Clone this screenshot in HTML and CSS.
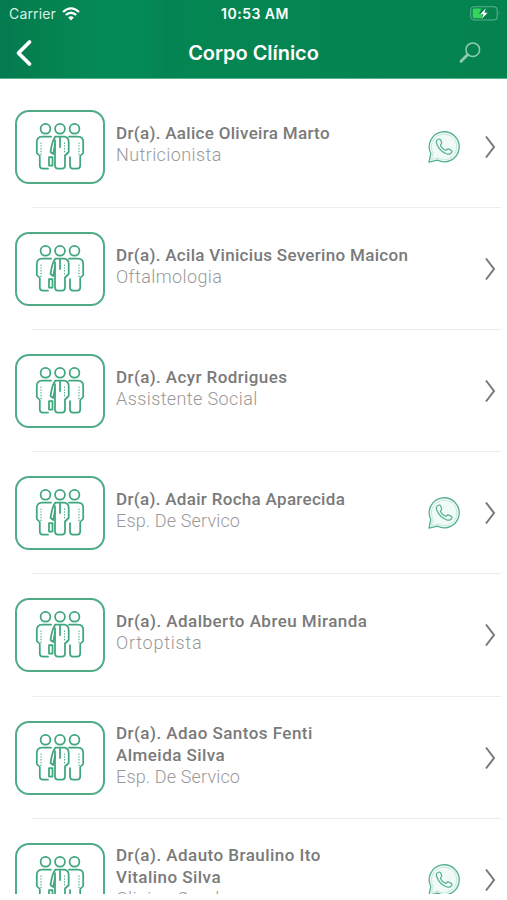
FILE: index.html
```
<!DOCTYPE html>
<html lang="pt-BR">
<head>
<meta charset="utf-8">
<title>Corpo Clínico</title>
<link rel="stylesheet" href="styles.css">
</head>
<body>
<svg width="0" height="0" class="defs">
  <symbol id="people" viewBox="0 0 50 50">
    <g fill="none" stroke="#3fa67d" stroke-width="1.75" stroke-linecap="round" stroke-linejoin="round">
      <circle cx="10.5" cy="6.8" r="4.9"/><circle cx="25" cy="6.8" r="4.9"/><circle cx="39.5" cy="6.8" r="4.9"/>
      <path d="M16 14.7H7C3.5 14.7 1.8 16.5 1.8 20V31L4.8 34V43.5Q4.8 46.7 8 46.7H13"/>
      <path d="M34 14.7H43C46.5 14.7 48.2 16.5 48.2 20V31L45.2 34V43.5Q45.2 46.7 42 46.7H38Q35 46.7 35 43.5V35"/>
      <path d="M20.5 14.7H29.5Q33.7 15.5 33.7 20V30L30 33.5V43.5Q30 46.7 27 46.7H23Q20 46.7 20 43.5V18"/>
      <path d="M20.5 14.7Q17.5 17 15.5 30L18.2 32L20 23M25 15.5V25"/>
      <path d="M14 35H17.5V43.5H14Z"/>
      <path d="M6 21V34M29.5 21V30M44 21V34" stroke-width="1.2" stroke-dasharray=".3 2.5"/>
    </g>
  </symbol>
  <symbol id="chat" viewBox="0 0 34 34">
    <g fill="none" stroke="#55b18d" stroke-linejoin="round">
      <path d="M2 32.2L3.8 23.5A15 15 0 1 1 10.5 30.2Z" stroke-width="1.3" fill="#f0faf6"/>
      <path d="M4.5 29.5L6 23A12.7 12.7 0 1 1 11 28Z" stroke="#b9dfd0" stroke-width=".7"/>
      <path d="M11.3 9.3C9.6 10 9 12 9.8 14C11.8 19.3 15 22.2 20 24C22.5 24.8 25 23.2 25 21.3C25 20.5 22 18.7 20.8 18.8C20 19 19.5 20.5 18.5 20.3C16.5 19.6 14.3 17.5 13.5 15.5C13.4 14.7 14.8 14 14.7 13C14.5 12 13.4 9 12.3 9Q11.8 9 11.3 9.3Z" stroke-width="1.2"/>
    </g>
  </symbol>
  <symbol id="next" viewBox="0 0 12 26">
    <path d="M2 2.5L10 13L2 23.5" fill="none" stroke="#777" stroke-width="2"/>
  </symbol>
</svg>
<div class="screen">
  <header class="header">
    <div class="status">
      <div class="carrier"><span>Carrier</span>
        <svg width="18" height="14" viewBox="0 0 18 14" fill="none" stroke="#fff" stroke-width="2.3"><path d="M1 5Q9-2.2 17 5M3.8 8Q9 3.4 14.2 8"/><path d="M9 13.5L6.2 10.5Q9 8 11.8 10.5Z" fill="#fff" stroke="none"/></svg>
      </div>
      <div class="time">10:53 AM</div>
      <svg class="battery" width="31" height="15" viewBox="0 0 31 15"><rect x=".7" y=".7" width="26.5" height="13.3" rx="3.5" fill="none" stroke="#5cad8b" stroke-width="1.1"/><path d="M4 2.6H11.5L9 8H12V12.2H4Q2.7 12.2 2.7 10.7V4Q2.7 2.6 4 2.6Z" fill="#37d45c"/><path d="M15.8 2.2L10.3 8.2H13.4L11.9 12.8L17.6 6.7H14.4Z" fill="#fff"/><path d="M28.8 5V9.8Q30.5 7.4 28.8 5Z" fill="#5cad8b"/></svg>
    </div>
    <div class="nav">
      <svg width="18" height="28" viewBox="0 0 18 28"><path d="M14.5 3L3.5 14L14.5 25" fill="none" stroke="#fff" stroke-width="3.8" stroke-linecap="round" stroke-linejoin="round"/></svg>
      <h1>Corpo Clínico</h1>
      <svg width="24" height="24" viewBox="0 0 24 24" fill="none" stroke="#8ecbb0"><circle cx="14.8" cy="8.7" r="6.8" stroke-width="1.5"/><path d="M9.6 13.7L3 20.3" stroke-width="3" stroke-linecap="round"/></svg>
    </div>
  </header>
  <main class="list">
    <article class="row"><div class="avatar"><svg><use href="#people"/></svg></div><div class="info"><h2 class="snug">Dr(a). Aalice Oliveira Marto</h2><p>Nutricionista</p></div><svg class="chat"><use href="#chat"/></svg><svg class="next"><use href="#next"/></svg></article>
    <article class="row"><div class="avatar"><svg><use href="#people"/></svg></div><div class="info"><h2 class="snug">Dr(a). Acila Vinicius Severino Maicon</h2><p>Oftalmologia</p></div><svg class="next"><use href="#next"/></svg></article>
    <article class="row"><div class="avatar"><svg><use href="#people"/></svg></div><div class="info"><h2>Dr(a). Acyr Rodrigues</h2><p>Assistente Social</p></div><svg class="next"><use href="#next"/></svg></article>
    <article class="row"><div class="avatar"><svg><use href="#people"/></svg></div><div class="info"><h2 class="snug">Dr(a). Adair Rocha Aparecida</h2><p class="snug">Esp. De Servico</p></div><svg class="chat"><use href="#chat"/></svg><svg class="next"><use href="#next"/></svg></article>
    <article class="row"><div class="avatar"><svg><use href="#people"/></svg></div><div class="info"><h2 class="loose">Dr(a). Adalberto Abreu Miranda</h2><p class="loose">Ortoptista</p></div><svg class="next"><use href="#next"/></svg></article>
    <article class="row"><div class="avatar"><svg><use href="#people"/></svg></div><div class="info"><h2 class="loose">Dr(a). Adao Santos Fenti<br>Almeida Silva</h2><p class="snug">Esp. De Servico</p></div><svg class="next"><use href="#next"/></svg></article>
    <article class="row"><div class="avatar"><svg><use href="#people"/></svg></div><div class="info"><h2 class="loose">Dr(a). Adauto Braulino Ito<br>Vitalino Silva</h2><p>Clinico Geral</p></div><svg class="chat"><use href="#chat"/></svg><svg class="next"><use href="#next"/></svg></article>
  </main>
</div>
</body>
</html>
```
FILE: styles.css
```
* { box-sizing: border-box; }
html, body { margin: 0; height: 900px; overflow: hidden; background: #fff; }
h1, h2, p { margin: 0; }
.defs { position: absolute; }
.screen { height: 894px; overflow: hidden; font-family: Roboto, sans-serif; }
.header {
  height: 79px;
  border-bottom: 1px solid #55b18c;
  background: linear-gradient(90deg, #047a4f 0, #04814f 40px, #048a56 100px, #048a56 145px, #048352 165px, #048653 190px, #04834f 507px);
  color: #fff;
  font-family: Inter, sans-serif;
}
.status { height: 27px; padding: 0 6px 0 9px; display: grid; grid-template-columns: 1fr auto 1fr; align-items: center; }
.carrier { display: flex; align-items: center; gap: 6px; font-size: 14px; letter-spacing: .15px; color: #d9efe5; }
.time { font-size: 14px; font-weight: 600; letter-spacing: .5px; }
.battery { justify-self: end; }
.nav { height: 51px; padding: 0 25px 0 15px; display: grid; grid-template-columns: 1fr auto 1fr; align-items: center; }
.nav svg:last-child { justify-self: end; }
.nav h1 { font-size: 20px; line-height: 26px; font-weight: 600; letter-spacing: -.05px; transform: translateX(5px); }
.list { padding-top: 6.6px; }
.row { position: relative; height: 122.2px; padding: 0 11px 0 15px; display: flex; align-items: center; }
.row::after { content: ""; position: absolute; left: 32px; right: 6px; bottom: 0; height: 1px; background: #ececec; }
.avatar { width: 90px; height: 74px; border: 2px solid #4fac86; border-radius: 14px; display: flex; align-items: center; justify-content: center; }
.avatar svg { width: 50px; height: 50px; }
.info { flex: 1; margin: 0 0 6px 11px; white-space: nowrap; }
.info h2 { font-size: 17px; line-height: 22px; font-weight: 500; letter-spacing: .4px; color: #7a7a7a; }
.info p { font-size: 18px; line-height: 22px; font-weight: 300; letter-spacing: .4px; color: #999; }
.info h2.snug { letter-spacing: .31px; }
.info h2.loose { letter-spacing: .46px; }
.info p.snug { letter-spacing: .15px; }
.info p.loose { letter-spacing: .75px; }
.chat { width: 34px; height: 34px; margin-right: 23px; }
.next { width: 12px; height: 26px; }
```
